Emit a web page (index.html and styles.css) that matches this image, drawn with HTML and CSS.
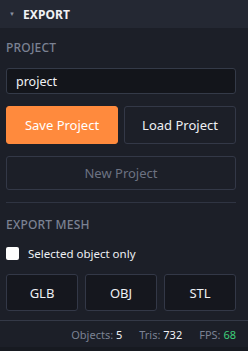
FILE: index.html
```html
<!DOCTYPE html>
<html>
<head>
<meta charset="utf-8">
<link rel="stylesheet" href="styles.css">
</head>
<body>
<div class="panel">
  <div class="header"><span class="caret">▼</span><span class="title">EXPORT</span></div>
  <div class="content">
    <div class="label">PROJECT</div>
    <input class="input" type="text" value="project">
    <div class="row two">
      <button class="btn primary">Save Project</button>
      <button class="btn">Load Project</button>
    </div>
    <button class="btn wide muted">New Project</button>
    <div class="divider"></div>
    <div class="label mesh">EXPORT MESH</div>
    <label class="check"><span class="box"></span><span>Selected object only</span></label>
    <div class="row three">
      <button class="btn dark">GLB</button>
      <button class="btn dark">OBJ</button>
      <button class="btn dark">STL</button>
    </div>
  </div>
  <div class="footer">
    <span class="stat">Objects: <b>5</b></span>
    <span class="stat">Tris: <b>732</b></span>
    <span class="stat">FPS: <b class="green">68</b></span>
  </div>
</div>
</body>
</html>
```
FILE: styles.css
```css
* { box-sizing: border-box; }
html, body { margin: 0; padding: 0; background: #171a21; }
body { font-family: "Noto Sans", "Open Sans", sans-serif; color: #e6e8ee; width: 248px; height: 351px; overflow: hidden; }
.panel { background: #1c1f28; height: 347px; display: flex; flex-direction: column; }
.header { height: 28px; background: #242833; display: flex; align-items: center; padding-left: 9px; }
.caret { font-size: 6px; color: #8a90a0; width: 14px; }
.title { font-size: 12px; font-weight: 700; color: #f1f2f5; letter-spacing: 0.1px; }
.content { padding: 12px 12px 0 6px; display: flex; flex-direction: column; flex: 1; }
.label { font-size: 12px; line-height: 16px; color: #7b8293; letter-spacing: 0.2px; font-weight: 500; }
.label.mesh { margin-top: 14px; }
.input { margin-top: 12px; height: 26px; width: 100%; background: #13151b; border: 1px solid #343a48; border-radius: 3px; color: #f1f2f5; font-family: inherit; font-size: 12.5px; padding: 0 9px; outline: none; }
.row { display: grid; gap: 6px; margin-top: 12px; }
.row.two { grid-template-columns: 1fr 1fr; }
.row.three { grid-template-columns: 1fr 1fr 1fr; gap: 7px; margin-top: 13px; }
.btn { height: 38px; border: 1px solid #333847; background: #1c1f28; color: #eef0f4; border-radius: 3px; font-family: inherit; font-size: 13px; padding: 0; }
.btn.primary { background: #ff8a3d; border-color: #ff8a3d; color: #fff; }
.btn.wide { margin-top: 12px; height: 34px; width: 100%; }
.btn.muted { color: #6c7282; }
.btn.dark { background: #15171e; height: 37px; }
.divider { height: 1px; background: #2f3442; margin-top: 12px; }
.check { display: flex; align-items: center; margin-top: 12px; font-size: 11.5px; color: #eef0f4; height: 16px; }
.box { width: 13px; height: 13px; background: #fff; border-radius: 2px; margin-right: 9px; }
.footer { height: 27px; border-top: 1px solid #343947; display: flex; justify-content: flex-end; align-items: center; gap: 17px; padding-right: 12px; font-size: 11px; color: #7b8293; }
.footer b { font-weight: 400; color: #f1f2f5; }
.footer b.green { color: #3ecf7a; }
```
